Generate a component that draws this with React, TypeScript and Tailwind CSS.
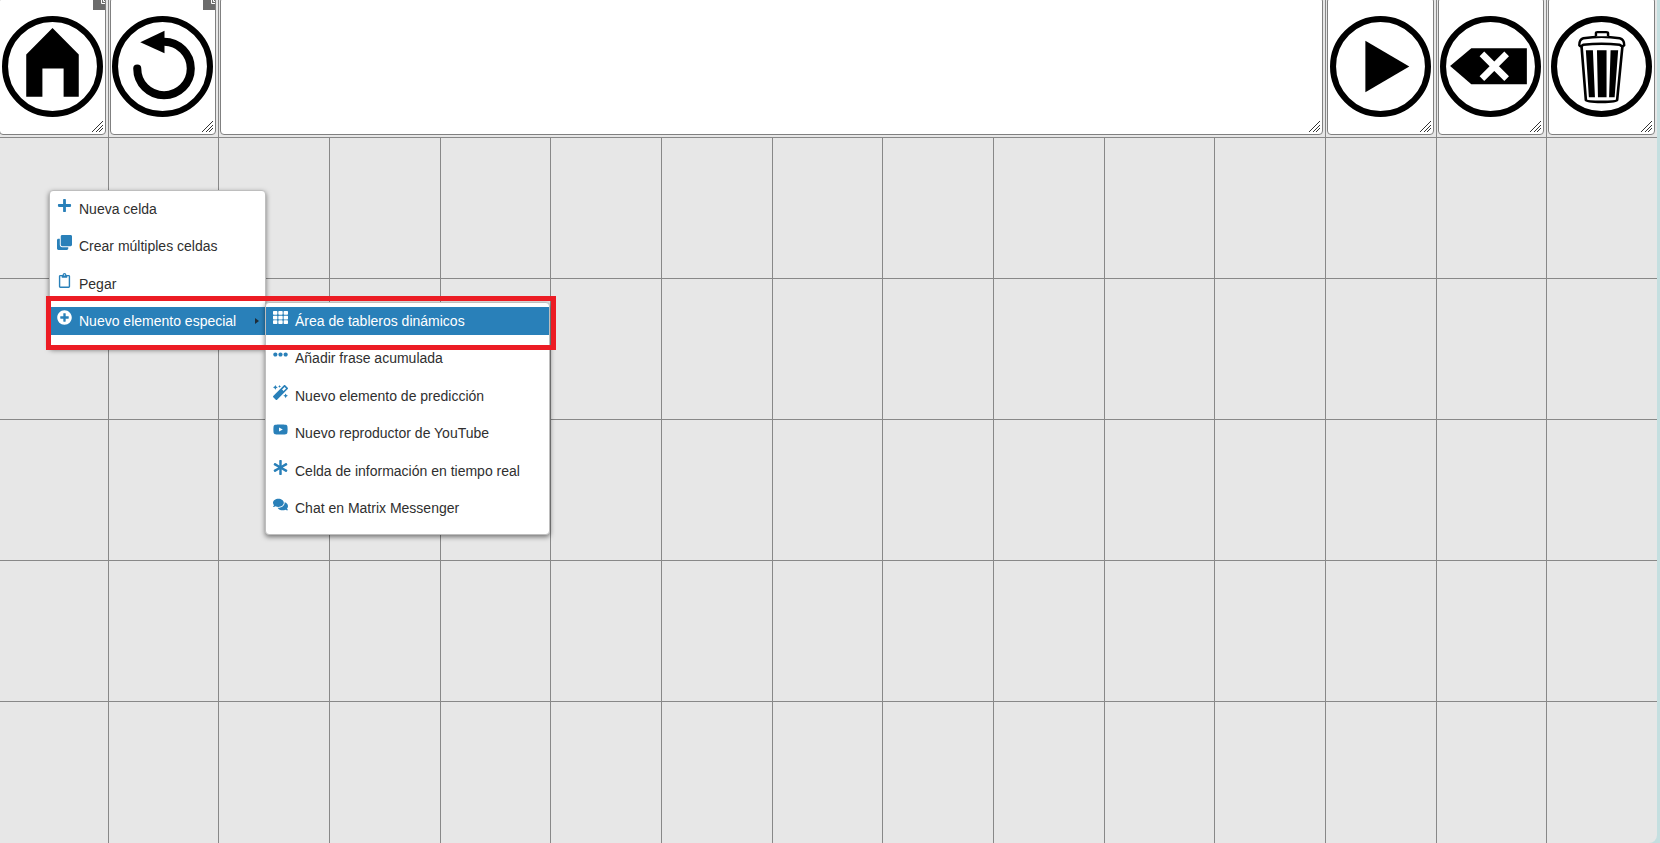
import type { ReactNode } from 'react';
import type { IconType } from 'react-icons';
import {
  FaPlus,
  FaClone,
  FaRegClipboard,
  FaPlusCircle,
  FaTh,
  FaEllipsisH,
  FaMagic,
  FaYoutube,
  FaAsterisk,
  FaComments,
} from 'react-icons/fa';

interface MenuEntry {
  label: string;
  icon: IconType;
  active?: boolean;
  hasSubmenu?: boolean;
}

const COLUMNS = 15;
const EMPTY_ROWS = 5;

const mainEntries: MenuEntry[] = [
  { label: 'Nueva celda', icon: FaPlus },
  { label: 'Crear múltiples celdas', icon: FaClone },
  { label: 'Pegar', icon: FaRegClipboard },
  { label: 'Nuevo elemento especial', icon: FaPlusCircle, active: true, hasSubmenu: true },
];

const specialEntries: MenuEntry[] = [
  { label: 'Área de tableros dinámicos', icon: FaTh, active: true },
  { label: 'Añadir frase acumulada', icon: FaEllipsisH },
  { label: 'Nuevo elemento de predicción', icon: FaMagic },
  { label: 'Nuevo reproductor de YouTube', icon: FaYoutube },
  { label: 'Celda de información en tiempo real', icon: FaAsterisk },
  { label: 'Chat en Matrix Messenger', icon: FaComments },
];

function Pictogram({ children }: { children: ReactNode }) {
  return (
    <svg viewBox="0 0 100 100" className="w-[101px] h-[101px]" aria-hidden="true">
      <circle cx="50" cy="50" r="47" fill="none" stroke="#000" strokeWidth="6" />
      {children}
    </svg>
  );
}

function HomeIcon() {
  return (
    <Pictogram>
      <path d="M50 12 L76 38 V80 H61 V52 H40 V80 H24 V38 Z" />
    </Pictogram>
  );
}

function BackIcon() {
  return (
    <Pictogram>
      <path d="M25 52 A26.500 26.500 0 1 0 51.500 25.500" fill="none" stroke="#000" strokeWidth="8" strokeLinecap="round" />
      <path d="M28 26 L52 14.500 V37 Z" />
    </Pictogram>
  );
}

function PlayIcon() {
  return (
    <Pictogram>
      <path d="M35 24.500 L78.500 50 L35 75.500 Z" />
    </Pictogram>
  );
}

function DeleteWordIcon() {
  return (
    <Pictogram>
      <path d="M10 49.500 L31 32 H86 V67.500 H31 Z" />
      <path d="M41.500 37.500 L66 62 M66 37.500 L41.500 62" stroke="#fff" strokeWidth="6.500" />
    </Pictogram>
  );
}

function TrashIcon() {
  return (
    <Pictogram>
      <path d="M30 27 L34.500 83 Q35 85 50 85 Q65 85 65.500 83 L71 27" fill="#fff" stroke="#000" strokeWidth="2.600" />
      <path d="M28 29 Q28 23 32 22 Q50 19 68 22 Q72.500 23 72.500 29 Q71 31 68 28.500 Q50 26.500 32 28.500 Q29 31 28 29 Z" fill="#fff" stroke="#000" strokeWidth="2.400" strokeLinejoin="round" />
      <path d="M44.500 20 V17 Q44.500 16 46 16 H54.500 Q56.500 16 56.500 17 V20" fill="#fff" stroke="#000" strokeWidth="2.400" />
      <path d="M34.500 34 H41.500 L43.500 80.500 H37.500 Z M45.500 34 H55 V80.500 H46.500 Z M59 34 H66.500 L63 80.500 H57.500 Z" />
    </Pictogram>
  );
}

function ResizeGrip() {
  return (
    <svg viewBox="0 0 12 12" className="absolute right-px bottom-px w-3 h-3" shapeRendering="crispEdges" aria-hidden="true">
      <path d="M0 11 L11 0 M4 11 L11 4 M7 11 L11 7" stroke="#333" strokeWidth="1" />
    </svg>
  );
}

// Marks cells that open another board
function LinkBadge() {
  return (
    <span className="absolute top-0 right-0 w-3 h-3 bg-[#6c6c6c]">
      <svg viewBox="0 0 12 12" className="w-3 h-3" aria-hidden="true">
        <path d="M8.500 2 V5.500 H12 M10.500 2 V3.500 H12" fill="none" stroke="#fff" strokeWidth="1" />
      </svg>
    </span>
  );
}

interface CellProps {
  label: string;
  badge?: boolean;
  children: ReactNode;
}

function ActionCell({ label, badge, children }: CellProps) {
  return (
    <div className="border-r border-b border-[#888] pr-0.5 pb-0.5 pl-px">
      <button
        aria-label={label}
        className="relative flex h-full w-full items-center justify-center rounded border border-[#808080] bg-white"
      >
        {children}
        {badge && <LinkBadge />}
        <ResizeGrip />
      </button>
    </div>
  );
}

function MenuItem({ label, icon: Icon, active, hasSubmenu }: MenuEntry) {
  return (
    <li>
      <button
        className={`relative flex h-7 w-full items-center text-left ${
          active ? 'bg-[#2980b9] text-white' : 'text-[#2f2f2f]'
        }`}
      >
        <span className={`flex h-7 w-[29px] items-start pt-[3px] pl-[7px] ${active ? 'text-white' : 'text-[#2980b9]'}`}>
          <Icon size={15} />
        </span>
        {label}
        {hasSubmenu && (
          <span className="absolute right-1.5 border-y-[3px] border-l-4 border-y-transparent border-l-[#1f2d3a]" />
        )}
      </button>
    </li>
  );
}

export default function App() {
  return (
    <div className="relative h-screen overflow-hidden bg-[#c5dfe0] font-['Liberation_Sans',Arial,sans-serif] text-sm">
      <main className="mr-[3px] h-full overflow-hidden rounded-br-lg bg-[#e7e7e7]">
        <div className="-mt-[3px] -mr-px -ml-0.5 grid h-[calc(100vh+3px)] grid-cols-15 grid-rows-6">
          <ActionCell label="Inicio" badge>
            <HomeIcon />
          </ActionCell>
          <ActionCell label="Volver" badge>
            <BackIcon />
          </ActionCell>
          <div className="col-span-10 border-r border-b border-[#888] pr-0.5 pb-0.5 pl-px">
            <div className="relative h-full rounded border border-[#808080] bg-white">
              <ResizeGrip />
            </div>
          </div>
          <ActionCell label="Reproducir">
            <PlayIcon />
          </ActionCell>
          <ActionCell label="Borrar palabra">
            <DeleteWordIcon />
          </ActionCell>
          <ActionCell label="Borrar todo">
            <TrashIcon />
          </ActionCell>
          {Array.from({ length: COLUMNS * EMPTY_ROWS }, (_, i) => (
            <div
              key={i}
              className={i < COLUMNS * (EMPTY_ROWS - 1) ? 'border-r border-b border-[#888]' : 'border-r border-[#888]'}
            />
          ))}
        </div>
      </main>

      {/* Context menu */}
      <ul className="absolute top-[190px] left-[49px] flex h-[158px] w-[217px] flex-col justify-between rounded-sm border border-[#bebebe] bg-white pt-1 pb-3 shadow-[0_2px_5px_rgba(0,0,0,0.5)]">
        {mainEntries.map((entry) => (
          <MenuItem key={entry.label} {...entry} />
        ))}
      </ul>

      {/* Submenu */}
      <ul className="absolute top-[302px] left-[265px] flex h-[233px] w-[285px] flex-col justify-between rounded-sm border border-[#bebebe] bg-white pt-1 pb-3 shadow-[0_2px_5px_rgba(0,0,0,0.5)]">
        {specialEntries.map((entry) => (
          <MenuItem key={entry.label} {...entry} />
        ))}
      </ul>

      <div className="pointer-events-none absolute top-[296px] left-[46px] h-[54px] w-[510px] border-5 border-[#ec1c24]" />
    </div>
  );
}
